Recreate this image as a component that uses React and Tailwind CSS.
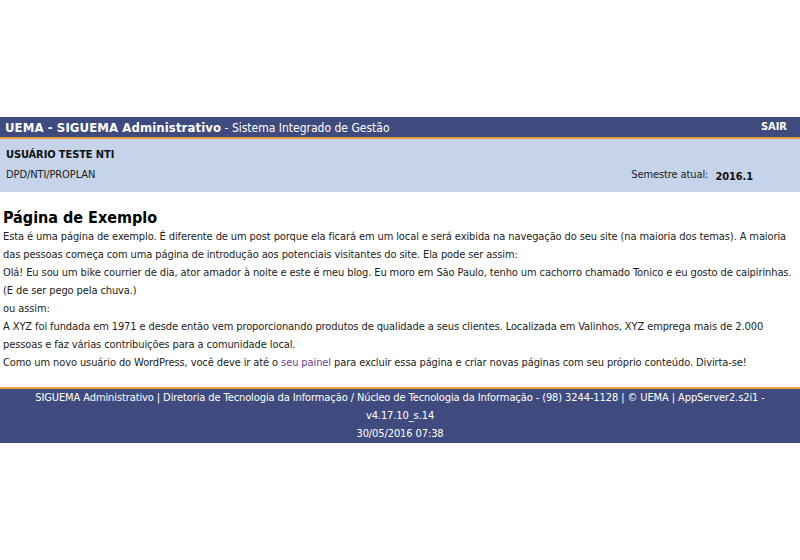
export default function App() {
  return (
    <div className="w-[800px] h-[560px] bg-white text-[#222] font-['DejaVu_Sans_Condensed','DejaVu_Sans',sans-serif] tracking-[-0.1px]">
      <div className="h-[117px]" />
      <div className="h-[20px] bg-[#3f4b7e] flex items-center justify-between px-[5px] tracking-normal">
        <div className="text-white whitespace-nowrap leading-none">
          <span className="font-bold text-[13px] tracking-[0.1px]">UEMA - SIGUEMA Administrativo</span>
          <span className="text-[12px]"> - Sistema Integrado de Gestão</span>
        </div>
        <span className="text-white font-bold text-[11px] pr-[8px]">SAIR</span>
      </div>
      <div className="h-[2px] bg-[#e8a03a]" />
      <div className="h-[53px] bg-[#c5d3eb] px-[6px] pt-[9px] text-[11px] flex flex-col">
        <div className="font-bold text-[#111] leading-[14px]">USUÁRIO TESTE NTI</div>
        <div className="flex justify-between items-end mt-[6px] leading-[14px]">
          <span>DPD/NTI/PROPLAN</span>
          <span className="pr-[41px]">
            Semestre atual: <b className="inline-block translate-y-[2px] ml-[4px] text-[#111]">2016.1</b>
          </span>
        </div>
      </div>
      <div className="px-[3px] pt-[16px] h-[195px]">
        <h1 className="text-[16px] font-bold leading-[20px] text-black tracking-normal">Página de Exemplo</h1>
        <div className="text-[11px] leading-[18px]">
          <p>Esta é uma página de exemplo. É diferente de um post porque ela ficará em um local e será exibida na navegação do seu site (na maioria dos temas). A maioria das pessoas começa com uma página de introdução aos potenciais visitantes do site. Ela pode ser assim:</p>
          <p>Olá! Eu sou um bike courrier de dia, ator amador à noite e este é meu blog. Eu moro em São Paulo, tenho um cachorro chamado Tonico e eu gosto de caipirinhas. (E de ser pego pela chuva.)</p>
          <p>ou assim:</p>
          <p>A XYZ foi fundada em 1971 e desde então vem proporcionando produtos de qualidade a seus clientes. Localizada em Valinhos, XYZ emprega mais de 2.000 pessoas e faz várias contribuições para a comunidade local.</p>
          <p>Como um novo usuário do WordPress, você deve ir até o <a className="text-[#6b3fa0]">seu painel</a> para excluir essa página e criar novas páginas com seu próprio conteúdo. Divirta-se!</p>
        </div>
      </div>
      <div className="h-[2px] bg-[#e8a03a]" />
      <div className="h-[54px] bg-[#3f4b7e] text-white text-[11px] leading-[18px] text-center px-[30px]">
        <div>SIGUEMA Administrativo | Diretoria de Tecnologia da Informação / Núcleo de Tecnologia da Informação - (98) 3244-1128 | © UEMA | AppServer2.s2i1 - v4.17.10_s.14</div>
        <div>30/05/2016 07:38</div>
      </div>
    </div>
  );
}
